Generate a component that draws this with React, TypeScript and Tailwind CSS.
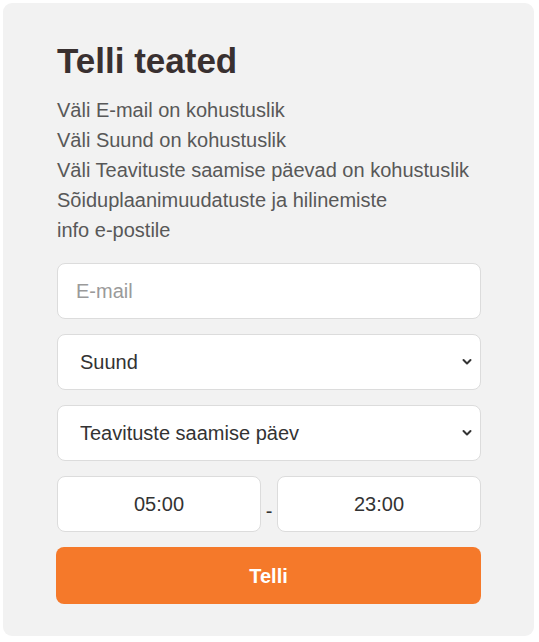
import React from "react";

function Chevron() {
  return (
    <svg
      className="pointer-events-none absolute right-[9px] top-1/2 -translate-y-1/2"
      width="10"
      height="7"
      viewBox="0 0 10 7"
      fill="none"
    >
      <path d="M1.5 1.5 L5 5 L8.5 1.5" stroke="#333" strokeWidth="2" strokeLinecap="round" strokeLinejoin="round" />
    </svg>
  );
}

export default function App() {
  return (
    <div className="bg-white min-h-[642px] pt-[3px] pl-[3px] font-['Liberation_Sans',Arial,sans-serif]">
      <div className="w-[531px] h-[633px] rounded-[9px] bg-[#f2f2f2] pt-[38px] pl-[54px] pr-[53px] pb-[32px]">
        <h1 className="text-[35px] leading-[40px] font-bold text-[#393030] mb-[14px]">Telli teated</h1>
        <div className="text-[20px] leading-[30px] text-[#585858]">
          <p>Väli E-mail on kohustuslik</p>
          <p>Väli Suund on kohustuslik</p>
          <p>Väli Teavituste saamise päevad on kohustuslik</p>
          <p>Sõiduplaanimuudatuste ja hilinemiste</p>
          <p>info e-postile</p>
        </div>
        <div className="mt-[18px] flex flex-col gap-[15px]">
          <input
            type="text"
            placeholder="E-mail"
            className="h-[56px] w-full rounded-[8px] border border-[#dcdcdc] bg-white px-[18px] text-[20px] text-[#333] placeholder:text-[#9a9a9a] outline-none"
          />
          <div className="relative">
            <select className="h-[56px] w-full appearance-none rounded-[8px] border border-[#dcdcdc] bg-white pl-[22px] pr-[30px] text-[20px] text-[#333] outline-none">
              <option>Suund</option>
            </select>
            <Chevron />
          </div>
          <div className="relative">
            <select className="h-[56px] w-full appearance-none rounded-[8px] border border-[#dcdcdc] bg-white pl-[22px] pr-[30px] text-[20px] text-[#333] outline-none">
              <option>Teavituste saamise päev</option>
            </select>
            <Chevron />
          </div>
          <div className="flex">
            <div className="flex h-[56px] w-[204px] items-center justify-center rounded-[8px] border border-[#dcdcdc] bg-white text-[20px] text-[#333]">
              05:00
            </div>
            <span className="w-[16px] pt-[20px] text-center text-[20px] leading-[30px] text-[#333]">-</span>
            <div className="flex h-[56px] flex-1 items-center justify-center rounded-[8px] border border-[#dcdcdc] bg-white text-[20px] text-[#333]">
              23:00
            </div>
          </div>
          <button className="-ml-px h-[57px] w-[425px] rounded-[8px] bg-[#f5792a] text-[20px] font-bold text-white">
            Telli
          </button>
        </div>
      </div>
    </div>
  );
}
